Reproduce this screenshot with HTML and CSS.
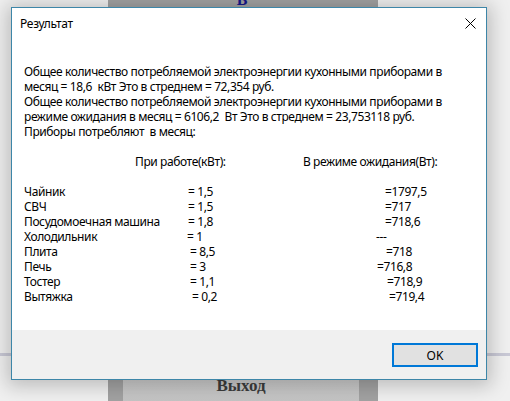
FILE: index.html
```html
<!DOCTYPE html>
<html lang="ru">
<head>
<meta charset="utf-8">
<title>Результат</title>
<link rel="stylesheet" href="styles.css">
</head>
<body>
<div class="app">
  <div class="app-col">
    <div class="app-top"><span class="app-top-text">В</span></div>
    <div class="app-spacer"></div>
    <div class="app-btn">Выход</div>
  </div>
  <div class="app-line"></div>
</div>

<div class="dialog">
  <div class="titlebar">
    <span class="title">Результат</span>
    <svg class="close" width="11" height="11" viewBox="0 0 11 11"><path d="M0.5 0.5 L10.5 10.5 M10.5 0.5 L0.5 10.5" stroke="#000" stroke-width="1" fill="none"/></svg>
  </div>
  <div class="content">
    <div class="line">Общее количество потребляемой электроэнергии кухонными приборами в</div>
    <div class="line">месяц = 18,6  кВт Это в стреднем = 72,354 руб.</div>
    <div class="line">Общее количество потребляемой электроэнергии кухонными приборами в</div>
    <div class="line">режиме ожидания в месяц = 6106,2  Вт Это в стреднем = 23,753118 руб.</div>
    <div class="line">Приборы потребляют  в месяц:</div>
    <div class="line"></div>
    <div class="hdr">
      <span class="h1">При работе(кВт):</span>
      <span class="h2">В режиме ожидания(Вт):</span>
    </div>
    <div class="line"></div>
    <div class="tbl">
      <span>Чайник</span><span class="i2">= 1,5</span><span class="i9">=1797,5</span>
      <span>СВЧ</span><span class="i2">= 1,5</span><span class="i9">=717</span>
      <span>Посудомоечная машина</span><span class="i2">= 1,8</span><span class="i9">=718,6</span>
      <span>Холодильник</span><span class="i1">= 1</span><span class="i0">---</span>
      <span>Плита</span><span class="i4">= 8,5</span><span class="i10">=718</span>
      <span>Печь</span><span class="i4">= 3</span><span class="i1">=716,8</span>
      <span>Тостер</span><span class="i4">= 1,1</span><span class="i11">=718,9</span>
      <span>Вытяжка</span><span class="i6">= 0,2</span><span class="i13">=719,4</span>
    </div>
  </div>
  <div class="footer">
    <button class="ok">OK</button>
  </div>
</div>
</body>
</html>
```

FILE: styles.css
```css
html, body {
  margin: 0;
  padding: 0;
}
body {
  width: 510px;
  height: 401px;
  overflow: hidden;
  background: #f0f0f0;
  position: relative;
  font-family: "Noto Sans", "Open Sans", sans-serif;
}
.app {
  height: 401px;
}
.app-col {
  margin-left: 108px;
  width: 270px;
  height: 401px;
  background: #a2a2a2;
  display: flex;
  flex-direction: column;
}
.app-top {
  height: 8px;
  display: flex;
  justify-content: center;
  overflow: hidden;
}
.app-top-text {
  font-family: "Liberation Serif", serif;
  font-weight: bold;
  font-size: 16px;
  color: #16168a;
  line-height: 16px;
  margin-top: -8px;
  margin-left: -2px;
}
.app-spacer {
  flex: 1;
}
.app-btn {
  margin: 0 19px 0 15px;
  height: 40px;
  background: linear-gradient(#d0d0d0, #c4c4c4);
  font-family: "Liberation Serif", serif;
  font-weight: bold;
  font-size: 17px;
  color: #3c3c3c;
  text-align: center;
  line-height: 20px;
  padding-top: 15px;
  box-sizing: border-box;
}
.app-line {
  position: absolute;
  left: 0;
  right: 0;
  top: 353px;
  height: 3px;
  background: #c9c9d6;
}

.dialog {
  position: absolute;
  left: 11px;
  top: 7px;
  width: 476px;
  height: 373px;
  box-sizing: border-box;
  border: 1px solid #3d86a8;
  background: #fff;
  display: flex;
  flex-direction: column;
  box-shadow: 0 2px 18px 4px rgba(0, 0, 0, 0.22);
  font-size: 12px;
  color: #000;
}
.titlebar {
  height: 31px;
  display: flex;
  align-items: center;
  justify-content: space-between;
  padding: 0 10px 0 8px;
  flex: none;
}
.title {
  font-size: 12px;
  letter-spacing: -0.3px;
}
.close {
  display: block;
}
.content {
  flex: 1;
  padding: 25px 0 0 12px;
  letter-spacing: -0.4px;
}
.line {
  height: 15px;
  line-height: 15px;
  white-space: pre;
}
.hdr {
  height: 15px;
  line-height: 15px;
  display: flex;
  white-space: pre;
}
.h1 {
  margin-left: 111px;
  width: 168px;
}
.tbl {
  display: grid;
  grid-template-columns: 162px 190px auto;
  grid-auto-rows: 15px;
  line-height: 15px;
  white-space: pre;
}
.i0 { padding-left: 0; }
.i1 { padding-left: 1px; }
.i2 { padding-left: 2px; }
.i4 { padding-left: 4px; }
.i6 { padding-left: 6px; }
.i9 { padding-left: 9px; }
.i10 { padding-left: 10px; }
.i11 { padding-left: 11px; }
.i13 { padding-left: 13px; }
.footer {
  height: 49px;
  flex: none;
  background: #f0f0f0;
  display: flex;
  justify-content: flex-end;
  align-items: flex-start;
  padding: 13px 8px 0 0;
  box-sizing: border-box;
}
.ok {
  width: 86px;
  height: 24px;
  box-sizing: border-box;
  border: 2px solid #0078d7;
  background: #e1e1e1;
  font-family: "Noto Sans", "Open Sans", sans-serif;
  font-size: 12px;
  color: #000;
  padding: 0;
  margin: 0;
}
```
